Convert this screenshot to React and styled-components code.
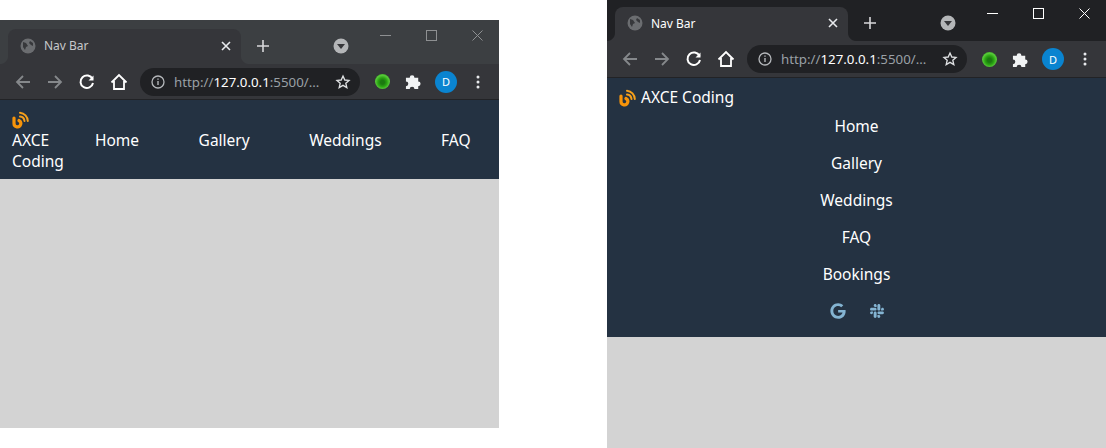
import React from "react";
import styled, { createGlobalStyle } from "styled-components";
import { FaGoogle, FaSlack } from "react-icons/fa";

const GlobalStyle = createGlobalStyle`
  html, body {
    margin: 0;
    padding: 0;
    background: #fff;
  }
  body {
    font-family: "Noto Sans", "Open Sans", sans-serif;
  }
`;

const Page = styled.div`
  width: 1106px;
  height: 448px;
  display: flex;
  justify-content: space-between;
  align-items: flex-start;
  overflow: hidden;
`;

const Window = styled.div`
  width: 499px;
  height: ${(p) => (p.$wide ? "448px" : "408px")};
  margin-top: ${(p) => (p.$wide ? "0" : "20px")};
  display: flex;
  flex-direction: column;
  background: #d3d3d3;
  overflow: hidden;
`;

const TitleBar = styled.div`
  height: ${(p) => (p.$wide ? "41px" : "44px")};
  flex: none;
  display: flex;
  align-items: flex-end;
  padding-left: 8px;
  background: ${(p) => (p.$wide ? "#202124" : "#3c3f42")};
  position: relative;
`;

const Tab = styled.div`
  width: 233px;
  height: ${(p) => (p.$wide ? "34px" : "35px")};
  box-sizing: border-box;
  display: flex;
  align-items: center;
  padding: 0 10px 2px 12px;
  background: #35363a;
  border-radius: 8px 8px 0 0;
  color: ${(p) => (p.$wide ? "#fff" : "#c6c8ca")};
  font-size: 12px;
  position: relative;

  &::before,
  &::after {
    content: "";
    position: absolute;
    bottom: 0;
    width: 8px;
    height: 8px;
  }
  &::before {
    left: -8px;
    background: radial-gradient(circle at 0 0, transparent 7.5px, #35363a 8.5px);
  }
  &::after {
    right: -8px;
    background: radial-gradient(circle at 100% 0, transparent 7.5px, #35363a 8.5px);
  }
`;

const TabTitle = styled.span`
  flex: 1;
  margin-left: 8px;
`;

const NewTab = styled.svg`
  width: 14px;
  height: 14px;
  margin: 0 0 11px 15px;
  flex: none;
`;

const TabSearch = styled.svg`
  width: 16px;
  height: 16px;
  margin: 0 0 10px 63px;
  flex: none;
`;

const Controls = styled.div`
  display: flex;
  position: absolute;
  top: ${(p) => (p.$wide ? "8px" : "10px")};
  right: 16px;
  gap: 35px;
`;

const Toolbar = styled.div`
  height: ${(p) => (p.$wide ? "36px" : "35px")};
  flex: none;
  display: flex;
  align-items: center;
  padding-left: 14px;
  background: #35363a;
  border-bottom: 1px solid #222326;
`;

const NavIcon = styled.svg`
  width: 18px;
  height: 18px;
  margin-right: 14px;
  flex: none;
`;

const Address = styled.div`
  width: 220px;
  height: 28px;
  box-sizing: border-box;
  display: flex;
  align-items: center;
  margin-left: -2px;
  padding: 0 9px 0 11px;
  border-radius: 14px;
  background: #202124;
  color: #9aa0a6;
  font-size: 13.3px;
  white-space: nowrap;
`;

const Url = styled.span`
  flex: 1;
  margin-left: 9px;
  b {
    font-weight: 400;
    color: #fff;
  }
`;

const Extensions = styled.div`
  display: flex;
  align-items: center;
  margin-left: 15px;
  gap: 13px;
`;

const Orb = styled.div`
  width: 15px;
  height: 15px;
  border-radius: 50%;
  background: radial-gradient(circle at 50% 55%, #1b7a10 0 18%, #2aa512 40%, #58c93a 62%, #1c9208 100%);
`;

const Puzzle = styled.svg`
  width: 17px;
  height: 17px;
  margin-left: 2px;
`;

const Avatar = styled.div`
  width: 22px;
  height: 22px;
  display: flex;
  align-items: center;
  justify-content: center;
  border-radius: 50%;
  background: #0a84d0;
  color: #fff;
  font-size: 11px;
`;

const Kebab = styled.svg`
  width: 4px;
  height: 14px;
  margin-left: 6px;
`;

const Nav = styled.nav`
  background: #243242;
  color: #fff;
  font-size: 15.5px;
  line-height: 21px;
  flex: none;
  display: flex;
  box-sizing: border-box;
  ${(p) =>
    p.$wide
      ? `
    height: 259px;
    flex-direction: column;
    padding: 9px 12px 0;
  `
      : `
    height: 79px;
    align-items: center;
    padding: 2px 0 0 12px;
  `}
`;

const Brand = styled.div`
  display: flex;
  flex: none;
  ${(p) =>
    p.$wide
      ? `
    align-items: center;
    gap: 5px;
  `
      : `
    width: 53px;
    padding-top: 1px;
    gap: 1px;
    flex-direction: column;
  `}
`;

const BrandLogo = styled.svg`
  width: 17px;
  height: 18px;
  flex: none;
`;

const Links = styled.div`
  display: flex;
  ${(p) =>
    p.$wide
      ? `
    flex-direction: column;
    align-items: center;
    gap: 16px;
    margin-top: 8px;
  `
      : `
    gap: 59.5px;
    margin-left: 30px;
    white-space: nowrap;
  `}
`;

const Socials = styled.div`
  display: flex;
  justify-content: center;
  gap: 23px;
  margin-top: 2px;
  padding-left: 2px;
  color: #84b4d2;
  font-size: 16px;
`;

const Body = styled.main`
  flex: 1;
  background: #d3d3d3;
`;

const links = ["Home", "Gallery", "Weddings", "FAQ", "Bookings"];

function Logo() {
  return (
    <BrandLogo viewBox="0 0 17 18" fill="none" strokeLinecap="round">
      <path d="M2 7v5.500a3.400 3.400 0 1 0 5-3" stroke="#f7940a" strokeWidth="3.200" />
      <path d="M8 5.500a5 5 0 0 1 4.500 4.500" stroke="#f7a01a" strokeWidth="2" />
      <path d="M8 1.800a8.500 8.500 0 0 1 7.800 8.200" stroke="#f7a01a" strokeWidth="2" />
    </BrandLogo>
  );
}

function Browser({ wide }) {
  const stroke = wide ? "#fff" : "#8e9092";
  const shown = wide ? links : links.slice(0, 4);
  return (
    <>
      <TitleBar $wide={wide}>
        <Tab $wide={wide}>
          <svg width="16" height="16" viewBox="0 0 16 16">
            <circle cx="8" cy="8" r="7.500" fill="#6b6d70" />
            <path d="M3 4l3 1 2 3-2 1-1 3-2-3zM10 3l3 2v3l-2-1-2-2z" fill="#37383b" />
          </svg>
          <TabTitle>Nav Bar</TabTitle>
          <svg width="10" height="10" viewBox="0 0 10 10">
            <path d="M1 1l8 8M9 1l-8 8" stroke="#e8eaed" strokeWidth="1.600" />
          </svg>
        </Tab>
        <NewTab viewBox="0 0 14 14">
          <path d="M7 1v12M1 7h12" stroke="#d7d8da" strokeWidth="1.600" />
        </NewTab>
        <TabSearch viewBox="0 0 16 16">
          <circle cx="8" cy="8" r="7.500" fill="#b4b6b8" />
          <path d="M4 6h8l-4 5z" fill="#36373a" />
        </TabSearch>
        <Controls $wide={wide}>
          <svg width="11" height="11" viewBox="0 0 11 11">
            <path d="M0 5.500h11" stroke={stroke} strokeWidth="1" />
          </svg>
          <svg width="11" height="11" viewBox="0 0 11 11">
            <rect x=".5" y=".5" width="10" height="10" fill="none" stroke={stroke} />
          </svg>
          <svg width="11" height="11" viewBox="0 0 11 11">
            <path d="M.5.5l10 10M10.500.5l-10 10" stroke={stroke} />
          </svg>
        </Controls>
      </TitleBar>
      <Toolbar $wide={wide}>
        <NavIcon viewBox="0 0 18 18" fill="none" stroke="#85888b" strokeWidth="1.800">
          <path d="M16 9H3M9 3L3 9l6 6" />
        </NavIcon>
        <NavIcon viewBox="0 0 18 18" fill="none" stroke="#85888b" strokeWidth="1.800">
          <path d="M2 9h13M9 3l6 6-6 6" />
        </NavIcon>
        <NavIcon viewBox="0 0 18 18" fill="none" stroke="#fff" strokeWidth="2">
          <path d="M14.500 6A6.300 6.300 0 1 0 15 10" />
          <path d="M15.500 2.500v5h-5z" fill="#fff" stroke="none" />
        </NavIcon>
        <NavIcon viewBox="0 0 18 18" fill="none" stroke="#fff" strokeWidth="1.800">
          <path d="M1.500 9.500L9 2l7.500 7.500M4 8v8h10V8" />
        </NavIcon>
        <Address>
          <svg width="14" height="14" viewBox="0 0 14 14" fill="none">
            <circle cx="7" cy="7" r="6" stroke="#b5b8bb" strokeWidth="1.300" />
            <path d="M7 6v4M7 3.500v1.300" stroke="#b5b8bb" strokeWidth="1.400" />
          </svg>
          <Url>
            http://<b>127.0.0.1</b>:5500/...
          </Url>
          <svg width="16" height="16" viewBox="0 0 24 24" fill="none" stroke="#dfe1e3" strokeWidth="2">
            <path d="M12 3l2.700 6 6.300.6-4.800 4.200 1.500 6.500L12 17l-5.700 3.300 1.500-6.500L3 9.600 9.300 9z" />
          </svg>
        </Address>
        <Extensions>
          <Orb />
          <Puzzle viewBox="0 0 18 18">
            <path d="M1 5h4a2.500 2.500 0 1 1 5 0h4v4a2.500 2.500 0 1 1 0 5v3h-4a2.500 2.500 0 1 0-5 0H1v-3a2.500 2.500 0 1 0 0-5z" fill="#f1f3f4" />
          </Puzzle>
          <Avatar>D</Avatar>
          <Kebab viewBox="0 0 4 14" fill="#e8eaed">
            <circle cx="2" cy="2" r="1.500" />
            <circle cx="2" cy="7" r="1.500" />
            <circle cx="2" cy="12" r="1.500" />
          </Kebab>
        </Extensions>
      </Toolbar>
      <Nav $wide={wide}>
        <Brand $wide={wide}>
          <Logo />
          <span>AXCE Coding</span>
        </Brand>
        <Links $wide={wide}>
          {shown.map((l) => (
            <span key={l}>{l}</span>
          ))}
          {wide && (
            <Socials>
              <FaGoogle />
              <FaSlack />
            </Socials>
          )}
        </Links>
      </Nav>
      <Body />
    </>
  );
}

export default function App() {
  return (
    <>
      <GlobalStyle />
      <Page>
        <Window>
          <Browser />
        </Window>
        <Window $wide>
          <Browser wide />
        </Window>
      </Page>
    </>
  );
}
